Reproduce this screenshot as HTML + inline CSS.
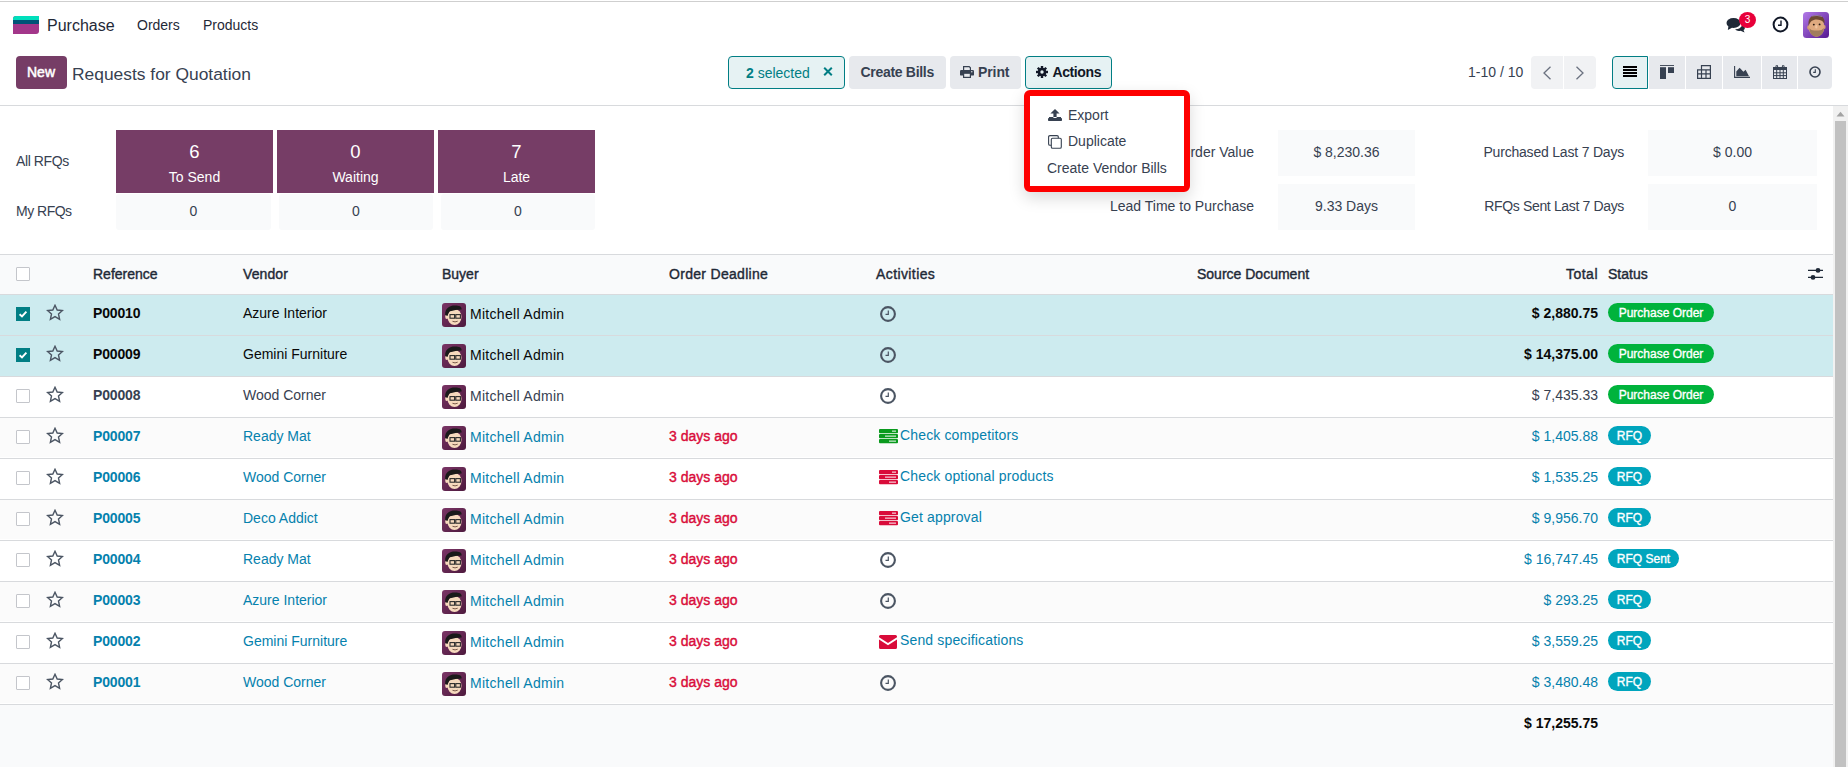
<!DOCTYPE html>
<html><head><meta charset="utf-8"><style>
*{box-sizing:border-box;margin:0;padding:0}
html,body{width:1848px;height:767px;overflow:hidden;background:#fff;font-family:"Liberation Sans",sans-serif;font-size:14px;color:#374151}
.a{position:absolute}
.t{position:absolute;white-space:nowrap;line-height:20px}
.b{font-weight:700}
.m{font-weight:400;-webkit-text-stroke:0.4px currentColor}
.topline{left:0;top:1px;width:1848px;height:1px;background:#cfcfcf}
.logo{left:13px;top:16px;width:26px;height:18px;border-radius:3px 0 3px 0;overflow:hidden;background:#a3368a}
.logo i{position:absolute;left:0;width:26px;display:block}
.cp{left:0;top:105px;width:1848px;height:1px;background:#d8dadd}
.btn{position:absolute;top:56px;height:33px;border-radius:4px}
.sec{background:#e7e9ed}
.act{background:#e6f2f3;border:1px solid #017e84}
.menu{left:1024px;top:90px;width:166px;height:102px;border:6px solid #fe0000;border-radius:6px;background:#fff;box-shadow:0 6px 16px rgba(0,0,0,0.15)}
.card{position:absolute;top:130px;width:157px;height:63px;background:#763d66}
.cell{position:absolute;background:#f9fafb;border-radius:3px}
.rowbg{position:absolute;left:0;width:1833px;height:41px}
.sel{background:#cdebef}
.str{background:#fbfbfb;height:39px}
.hline{position:absolute;left:0;width:1833px;height:1px;background:#d8dadd}
.cb{position:absolute;left:16px;width:14px;height:14px;border:1px solid #c4c6cb;background:#fff;border-radius:1px}
.cbon{background:#017e84;border-color:#017e84}
.badge{position:absolute;height:19px;border-radius:10px;color:#fff;font-weight:400;-webkit-text-stroke:0.35px #fff;font-size:12px;line-height:20px;text-align:center;white-space:nowrap}
.po{background:#00b33c}
.rfq{background:#00a5bd}
.info{color:#0581ad}
.dng{color:#d90c3a}
.dk{color:#080808}
.g7{color:#374151}
</style></head><body>
<div class="a topline"></div>
<div class="a logo"><i style="top:0;height:4px;background:#00dfbc"></i><i style="top:4px;height:4px;background:#005377"></i></div>
<div class="t " style="left:47px;top:16px;font-size:16px;color:#1f2937">Purchase</div>
<div class="t " style="left:137px;top:15px;color:#1f2937">Orders</div>
<div class="t " style="left:203px;top:15px;color:#1f2937">Products</div>
<svg class="a" style="left:1726px;top:17px" width="20" height="16" viewBox="0 0 20 16"><ellipse cx="7.5" cy="6" rx="7" ry="5" fill="#1f2937"/><path d="M2.5 9 L1.8 13 L6.5 10.5 Z" fill="#1f2937"/><path d="M9 12.2 Q14 12.5 16.5 8 L18.5 9.5 Q19.5 12 17.5 13 L18.6 15.6 L14.5 13.8 Q11 14.6 9 12.2 Z" fill="#1f2937"/></svg>
<div class="a" style="left:1739px;top:12px;width:17px;height:16px;border-radius:50%;background:#e8003a;color:#fff;font-size:10px;line-height:16px;text-align:center">3</div>
<svg class="a" style="left:1772px;top:16px" width="17" height="17" viewBox="0 0 17 17"><circle cx="8.5" cy="8.5" r="6.9" fill="none" stroke="#111827" stroke-width="2"/><path d="M9 4.5 V9.2 H6" fill="none" stroke="#111827" stroke-width="1.4"/></svg>
<svg class="a" style="left:1803px;top:12px" width="26" height="26" viewBox="0 0 26 26"><defs><linearGradient id="nv" x1="0" y1="0" x2="1" y2="1"><stop offset="0" stop-color="#b27ae8"/><stop offset="1" stop-color="#551890"/></linearGradient></defs><rect width="26" height="26" rx="3.5" fill="url(#nv)"/><ellipse cx="5.6" cy="15.5" rx="1.4" ry="2.3" fill="#d39c72"/><ellipse cx="21.4" cy="15" rx="1.2" ry="2.1" fill="#d39c72"/><ellipse cx="13.5" cy="14.8" rx="7.8" ry="10" fill="#dfa97f"/><path d="M5.6 14 C4.8 6.5 8 3 13.6 3 C19 3 22.2 6 21.6 12.5 C20.8 9.5 18.5 7.6 13.6 7.4 C9.5 7.4 7 9.5 5.6 14 Z" fill="#6d4932"/><path d="M9 4 Q14 2.6 19 4.5" stroke="#9a86b8" stroke-width="0.8" fill="none"/><circle cx="10.8" cy="12.6" r="0.95" fill="#2a1a12"/><circle cx="16.6" cy="12.4" r="0.95" fill="#2a1a12"/><path d="M6.4 16.2 Q8.5 19.3 13.5 18.4 Q18.5 19.3 20.8 16 Q21 23.6 13.6 24.8 Q6.6 24 6.4 16.2 Z" fill="#a17d5d"/><rect x="12.2" y="13" width="2.2" height="3.4" rx="1" fill="#efc39e"/></svg>
<div class="a cp"></div>
<div class="btn" style="left:16px;width:51px;background:#763d66"></div>
<div class="t m" style="left:27px;top:62px;color:#fff;-webkit-text-stroke:0.5px #fff">New</div>
<div class="t " style="left:72px;top:64px;font-size:17.4px;color:#374151">Requests for Quotation</div>
<div class="btn act" style="left:728px;width:117px"></div>
<div class="t " style="left:746px;top:63px;color:#017e84"><span class="b">2</span> selected</div>
<svg class="a" style="left:823px;top:67px" width="10" height="9" viewBox="0 0 10 9"><path d="M1.2 0.8 L8.8 8.2 M8.8 0.8 L1.2 8.2" stroke="#017e84" stroke-width="2"/></svg>
<div class="btn sec" style="left:849px;width:97px"></div>
<div class="t b" style="left:860.5px;top:62px;color:#374151;letter-spacing:-0.3px">Create Bills</div>
<div class="btn sec" style="left:950px;width:71px"></div>
<svg class="a" style="left:960px;top:66px" width="14" height="12" viewBox="0 0 14 12"><path d="M3.6 4 V0.6 H9.2 L10.4 1.8 V4" fill="none" stroke="#374151" stroke-width="1.2"/><rect x="0" y="4" width="14" height="5.6" rx="1.2" fill="#374151"/><rect x="3.6" y="7.2" width="6.8" height="4.2" fill="#e7e9ed" stroke="#374151" stroke-width="1.2"/><circle cx="11.8" cy="5.8" r="0.7" fill="#e7e9ed"/></svg>
<div class="t b" style="left:978px;top:62px;color:#374151;letter-spacing:-0.1px">Print</div>
<div class="btn act" style="left:1025px;width:87px"></div>
<svg class="a" style="left:1036px;top:66px" width="12" height="12" viewBox="0 0 12 12"><g fill="#111827"><circle cx="6" cy="6" r="4.3"/><rect x="4.8" y="0" width="2.4" height="12"/><rect x="0" y="4.8" width="12" height="2.4"/><rect x="4.8" y="0" width="2.4" height="12" transform="rotate(45 6 6)"/><rect x="4.8" y="0" width="2.4" height="12" transform="rotate(-45 6 6)"/></g><circle cx="6" cy="6" r="1.7" fill="#e6f2f3"/></svg>
<div class="t b" style="left:1052.5px;top:62px;color:#111827;letter-spacing:-0.4px">Actions</div>
<div class="t " style="left:1468px;top:62px;color:#374151">1-10 / 10</div>
<div class="btn" style="left:1531px;width:32px;background:#f1f2f4;border-radius:4px 0 0 4px"></div>
<div class="btn" style="left:1564px;width:32px;background:#f1f2f4;border-radius:0 4px 4px 0"></div>
<svg class="a" style="left:1542px;top:66px" width="10" height="14" viewBox="0 0 10 14"><path d="M8.5 0.8 L2 7 L8.5 13.2" fill="none" stroke="#6b7280" stroke-width="1.3"/></svg>
<svg class="a" style="left:1575px;top:66px" width="10" height="14" viewBox="0 0 10 14"><path d="M1.5 0.8 L8 7 L1.5 13.2" fill="none" stroke="#6b7280" stroke-width="1.3"/></svg>
<div class="btn act" style="left:1612px;width:36px;border-radius:4px 0 0 4px"></div>
<div class="btn sec" style="left:1649px;width:36px;border-radius:0"></div>
<div class="btn sec" style="left:1686px;width:36px;border-radius:0"></div>
<div class="btn sec" style="left:1723px;width:38px;border-radius:0"></div>
<div class="btn sec" style="left:1762px;width:35px;border-radius:0"></div>
<div class="btn sec" style="left:1798px;width:34px;border-radius:0 4px 4px 0"></div>
<svg class="a" style="left:1623px;top:66px" width="14" height="11" viewBox="0 0 14 11"><g fill="#000"><rect y="0" width="14" height="2"/><rect y="3" width="14" height="2"/><rect y="6" width="14" height="2"/><rect y="9" width="14" height="2"/></g></svg>
<svg class="a" style="left:1660px;top:65px" width="14" height="14" viewBox="0 0 14 14"><g fill="#374151"><rect y="0" width="14" height="0.9"/><rect x="0" y="2.2" width="6" height="11.8"/><rect x="8" y="2.2" width="6" height="5.8"/></g></svg>
<svg class="a" style="left:1697px;top:65px" width="14" height="14" viewBox="0 0 14 14"><path d="M4.5 0.6 H13.4 V13.4 H0.6 V4.8 H4.5 Z M4.5 4.8 H13.4 M0.6 8.9 H13.4 M4.5 4.8 V13.4 M9 4.8 V13.4" fill="none" stroke="#374151" stroke-width="1.2"/></svg>
<svg class="a" style="left:1734px;top:66px" width="16" height="12" viewBox="0 0 16 12"><path d="M0.6 0 V11.4 H16" fill="none" stroke="#374151" stroke-width="1.1"/><path d="M2.3 10.2 V5.5 L5.6 1.8 L9.4 5.8 L11.6 3.8 L15 10.2 Z" fill="#374151"/></svg>
<svg class="a" style="left:1773px;top:65px" width="14" height="14" viewBox="0 0 14 14"><rect x="0.5" y="2.5" width="13" height="11" fill="none" stroke="#374151" stroke-width="1"/><rect x="0.5" y="2.5" width="13" height="2.5" fill="#374151"/><path d="M0.5 7.8 H13.5 M0.5 10.6 H13.5 M3.7 5 V13.5 M7 5 V13.5 M10.3 5 V13.5" stroke="#374151" stroke-width="1"/><path d="M3 3.5 V1 Q3 0.2 3.8 0.2 Q4.6 0.2 4.6 1 V3.5 M9.4 3.5 V1 Q9.4 0.2 10.2 0.2 Q11 0.2 11 1 V3.5" fill="none" stroke="#374151" stroke-width="1"/></svg>
<svg class="a" style="left:1809px;top:66px" width="12" height="12" viewBox="0 0 12 12"><circle cx="6" cy="6" r="5" fill="none" stroke="#374151" stroke-width="1.6"/><path d="M6.3 3.2 V6.4 H4.2" fill="none" stroke="#374151" stroke-width="1.1"/></svg>
<div class="t " style="left:16px;top:151px;letter-spacing:-0.4px">All RFQs</div>
<div class="t " style="left:16px;top:201px;letter-spacing:-0.5px">My RFQs</div>
<div class="card" style="left:116px"></div>
<div class="t " style="left:94.5px;width:200px;text-align:center;top:141.5px;color:#fff;font-size:18.5px">6</div>
<div class="t " style="left:94.5px;width:200px;text-align:center;top:167px;color:#fff">To Send</div>
<div class="card" style="left:277px"></div>
<div class="t " style="left:255.5px;width:200px;text-align:center;top:141.5px;color:#fff;font-size:18.5px">0</div>
<div class="t " style="left:255.5px;width:200px;text-align:center;top:167px;color:#fff">Waiting</div>
<div class="card" style="left:438px"></div>
<div class="t " style="left:416.5px;width:200px;text-align:center;top:141.5px;color:#fff;font-size:18.5px">7</div>
<div class="t " style="left:416.5px;width:200px;text-align:center;top:167px;color:#fff">Late</div>
<div class="cell" style="left:116px;top:194px;width:155px;height:36px"></div>
<div class="t " style="left:93.5px;width:200px;text-align:center;top:201px;color:#374151">0</div>
<div class="cell" style="left:279px;top:194px;width:154px;height:36px"></div>
<div class="t " style="left:256.0px;width:200px;text-align:center;top:201px;color:#374151">0</div>
<div class="cell" style="left:441px;top:194px;width:154px;height:36px"></div>
<div class="t " style="left:418.0px;width:200px;text-align:center;top:201px;color:#374151">0</div>
<div class="t " style="right:594px;top:142px;">Average Order Value</div>
<div class="t " style="right:594px;top:196px;">Lead Time to Purchase</div>
<div class="t " style="right:224px;top:142px;letter-spacing:-0.2px">Purchased Last 7 Days</div>
<div class="t " style="right:224px;top:196px;letter-spacing:-0.35px">RFQs Sent Last 7 Days</div>
<div class="cell" style="left:1278px;top:130px;width:137px;height:46px;border-radius:0"></div>
<div class="cell" style="left:1278px;top:184px;width:137px;height:46px;border-radius:0"></div>
<div class="t " style="left:1246.5px;width:200px;text-align:center;top:142px;">$ 8,230.36</div>
<div class="t " style="left:1246.5px;width:200px;text-align:center;top:196px;">9.33 Days</div>
<div class="cell" style="left:1648px;top:130px;width:169px;height:46px;border-radius:0"></div>
<div class="cell" style="left:1648px;top:184px;width:169px;height:46px;border-radius:0"></div>
<div class="t " style="left:1632.5px;width:200px;text-align:center;top:142px;">$ 0.00</div>
<div class="t " style="left:1632.5px;width:200px;text-align:center;top:196px;">0</div>
<div class="hline" style="top:254px"></div>
<div class="a" style="left:0;top:255px;width:1833px;height:39px;background:#f9fafb"></div>
<div class="hline" style="top:294px"></div>
<div class="cb" style="top:267px"></div>
<div class="t m" style="left:93px;top:264px;color:#1f2937;letter-spacing:0px">Reference</div>
<div class="t m" style="left:243px;top:264px;color:#1f2937;letter-spacing:0.1px">Vendor</div>
<div class="t m" style="left:442px;top:264px;color:#1f2937;letter-spacing:0px">Buyer</div>
<div class="t m" style="left:669px;top:264px;color:#1f2937;letter-spacing:0.3px">Order Deadline</div>
<div class="t m" style="left:876px;top:264px;color:#1f2937;letter-spacing:0.4px">Activities</div>
<div class="t m" style="left:1197px;top:264px;color:#1f2937;letter-spacing:0px">Source Document</div>
<div class="t m" style="left:1608px;top:264px;color:#1f2937;letter-spacing:0px">Status</div>
<div class="t m" style="right:250px;top:264px;color:#1f2937;letter-spacing:0.5px">Total</div>
<svg class="a" style="left:1807px;top:267px" width="17" height="13" viewBox="0 0 17 13"><path d="M1 3.4 H16 M1 10.4 H16" stroke="#1f2937" stroke-width="1.3"/><circle cx="11" cy="3.4" r="2.4" fill="#1f2937"/><circle cx="6" cy="10.4" r="2.4" fill="#1f2937"/></svg>
<div class="rowbg sel" style="top:295px"></div>
<div class="hline" style="top:335px"></div>
<svg class="a" style="left:16px;top:307px" width="14" height="14" viewBox="0 0 14 14"><rect width="14" height="14" fill="#017e84"/><path d="M3.6 7.2 L6 9.4 L10.4 4.6" fill="none" stroke="#fff" stroke-width="1.9"/></svg>
<svg class="a" style="left:46px;top:304px" width="18" height="17" viewBox="0 0 18 17"><path d="M9 1.3 L11.2 6 L16.4 6.5 L12.5 10 L13.6 15.3 L9 12.6 L4.4 15.3 L5.5 10 L1.6 6.5 L6.8 6 Z" fill="none" stroke="#4b5563" stroke-width="1.4" stroke-linejoin="miter"/></svg>
<div class="t b dk" style="left:93px;top:303px;letter-spacing:-0.15px">P00010</div>
<div class="t dk" style="left:243px;top:303px;">Azure Interior</div>
<svg class="a" style="left:442px;top:303px" width="24" height="24" viewBox="0 0 24 24"><defs><linearGradient id="ag0" x1="0" y1="0" x2="1" y2="1"><stop offset="0" stop-color="#7a3566"/><stop offset="1" stop-color="#4e1a3e"/></linearGradient></defs><rect width="24" height="24" rx="3" fill="url(#ag0)"/><ellipse cx="12.5" cy="14" rx="7" ry="8" fill="#f6d9bd"/><ellipse cx="4.8" cy="13.8" rx="1.6" ry="2.3" fill="#f6d9bd"/><path d="M3.2 12 C2.8 5 8 2.5 13 2.6 C17 2.6 20 3.5 19.6 6.5 C16 6.6 11 7.5 8 8.2 C6.5 9.5 6 11 5.5 13 Z" fill="#1a1a1a"/><rect x="8" y="11.6" width="4.6" height="3.6" fill="none" stroke="#2a2a2a" stroke-width="1.1"/><rect x="13.8" y="11.6" width="4.6" height="3.6" fill="none" stroke="#2a2a2a" stroke-width="1.1"/><path d="M10.5 18.3 Q13 19.5 15.7 18.2" stroke="#7a5a4a" stroke-width="1" fill="none"/></svg>
<div class="t dk" style="left:470px;top:304px;letter-spacing:0.3px">Mitchell Admin</div>
<svg class="a" style="left:879px;top:304.5px" width="18" height="18" viewBox="0 0 18 18"><circle cx="9" cy="9" r="6.9" fill="none" stroke="#4b5563" stroke-width="2.1"/><path d="M9.3 5.4 V9.4 H6.5" fill="none" stroke="#4b5563" stroke-width="1.2"/></svg>
<div class="t b dk" style="right:250px;top:303px;">$ 2,880.75</div>
<div class="badge po" style="left:1608px;top:303px;width:106px">Purchase Order</div>
<div class="rowbg sel" style="top:336px"></div>
<div class="hline" style="top:376px"></div>
<svg class="a" style="left:16px;top:348px" width="14" height="14" viewBox="0 0 14 14"><rect width="14" height="14" fill="#017e84"/><path d="M3.6 7.2 L6 9.4 L10.4 4.6" fill="none" stroke="#fff" stroke-width="1.9"/></svg>
<svg class="a" style="left:46px;top:345px" width="18" height="17" viewBox="0 0 18 17"><path d="M9 1.3 L11.2 6 L16.4 6.5 L12.5 10 L13.6 15.3 L9 12.6 L4.4 15.3 L5.5 10 L1.6 6.5 L6.8 6 Z" fill="none" stroke="#4b5563" stroke-width="1.4" stroke-linejoin="miter"/></svg>
<div class="t b dk" style="left:93px;top:344px;letter-spacing:-0.15px">P00009</div>
<div class="t dk" style="left:243px;top:344px;">Gemini Furniture</div>
<svg class="a" style="left:442px;top:344px" width="24" height="24" viewBox="0 0 24 24"><defs><linearGradient id="ag1" x1="0" y1="0" x2="1" y2="1"><stop offset="0" stop-color="#7a3566"/><stop offset="1" stop-color="#4e1a3e"/></linearGradient></defs><rect width="24" height="24" rx="3" fill="url(#ag1)"/><ellipse cx="12.5" cy="14" rx="7" ry="8" fill="#f6d9bd"/><ellipse cx="4.8" cy="13.8" rx="1.6" ry="2.3" fill="#f6d9bd"/><path d="M3.2 12 C2.8 5 8 2.5 13 2.6 C17 2.6 20 3.5 19.6 6.5 C16 6.6 11 7.5 8 8.2 C6.5 9.5 6 11 5.5 13 Z" fill="#1a1a1a"/><rect x="8" y="11.6" width="4.6" height="3.6" fill="none" stroke="#2a2a2a" stroke-width="1.1"/><rect x="13.8" y="11.6" width="4.6" height="3.6" fill="none" stroke="#2a2a2a" stroke-width="1.1"/><path d="M10.5 18.3 Q13 19.5 15.7 18.2" stroke="#7a5a4a" stroke-width="1" fill="none"/></svg>
<div class="t dk" style="left:470px;top:345px;letter-spacing:0.3px">Mitchell Admin</div>
<svg class="a" style="left:879px;top:345.5px" width="18" height="18" viewBox="0 0 18 18"><circle cx="9" cy="9" r="6.9" fill="none" stroke="#4b5563" stroke-width="2.1"/><path d="M9.3 5.4 V9.4 H6.5" fill="none" stroke="#4b5563" stroke-width="1.2"/></svg>
<div class="t b dk" style="right:250px;top:344px;">$ 14,375.00</div>
<div class="badge po" style="left:1608px;top:344px;width:106px">Purchase Order</div>
<div class="hline" style="top:417px"></div>
<div class="cb" style="top:389px"></div>
<svg class="a" style="left:46px;top:386px" width="18" height="17" viewBox="0 0 18 17"><path d="M9 1.3 L11.2 6 L16.4 6.5 L12.5 10 L13.6 15.3 L9 12.6 L4.4 15.3 L5.5 10 L1.6 6.5 L6.8 6 Z" fill="none" stroke="#4b5563" stroke-width="1.4" stroke-linejoin="miter"/></svg>
<div class="t b g7" style="left:93px;top:385px;letter-spacing:-0.15px">P00008</div>
<div class="t g7" style="left:243px;top:385px;">Wood Corner</div>
<svg class="a" style="left:442px;top:385px" width="24" height="24" viewBox="0 0 24 24"><defs><linearGradient id="ag2" x1="0" y1="0" x2="1" y2="1"><stop offset="0" stop-color="#7a3566"/><stop offset="1" stop-color="#4e1a3e"/></linearGradient></defs><rect width="24" height="24" rx="3" fill="url(#ag2)"/><ellipse cx="12.5" cy="14" rx="7" ry="8" fill="#f6d9bd"/><ellipse cx="4.8" cy="13.8" rx="1.6" ry="2.3" fill="#f6d9bd"/><path d="M3.2 12 C2.8 5 8 2.5 13 2.6 C17 2.6 20 3.5 19.6 6.5 C16 6.6 11 7.5 8 8.2 C6.5 9.5 6 11 5.5 13 Z" fill="#1a1a1a"/><rect x="8" y="11.6" width="4.6" height="3.6" fill="none" stroke="#2a2a2a" stroke-width="1.1"/><rect x="13.8" y="11.6" width="4.6" height="3.6" fill="none" stroke="#2a2a2a" stroke-width="1.1"/><path d="M10.5 18.3 Q13 19.5 15.7 18.2" stroke="#7a5a4a" stroke-width="1" fill="none"/></svg>
<div class="t g7" style="left:470px;top:386px;letter-spacing:0.3px">Mitchell Admin</div>
<svg class="a" style="left:879px;top:386.5px" width="18" height="18" viewBox="0 0 18 18"><circle cx="9" cy="9" r="6.9" fill="none" stroke="#4b5563" stroke-width="2.1"/><path d="M9.3 5.4 V9.4 H6.5" fill="none" stroke="#4b5563" stroke-width="1.2"/></svg>
<div class="t g7" style="right:250px;top:385px;">$ 7,435.33</div>
<div class="badge po" style="left:1608px;top:385px;width:106px">Purchase Order</div>
<div class="rowbg str" style="top:418px"></div>
<div class="hline" style="top:458px"></div>
<div class="cb" style="top:430px"></div>
<svg class="a" style="left:46px;top:427px" width="18" height="17" viewBox="0 0 18 17"><path d="M9 1.3 L11.2 6 L16.4 6.5 L12.5 10 L13.6 15.3 L9 12.6 L4.4 15.3 L5.5 10 L1.6 6.5 L6.8 6 Z" fill="none" stroke="#4b5563" stroke-width="1.4" stroke-linejoin="miter"/></svg>
<div class="t b info" style="left:93px;top:426px;letter-spacing:-0.15px">P00007</div>
<div class="t info" style="left:243px;top:426px;">Ready Mat</div>
<svg class="a" style="left:442px;top:426px" width="24" height="24" viewBox="0 0 24 24"><defs><linearGradient id="ag3" x1="0" y1="0" x2="1" y2="1"><stop offset="0" stop-color="#7a3566"/><stop offset="1" stop-color="#4e1a3e"/></linearGradient></defs><rect width="24" height="24" rx="3" fill="url(#ag3)"/><ellipse cx="12.5" cy="14" rx="7" ry="8" fill="#f6d9bd"/><ellipse cx="4.8" cy="13.8" rx="1.6" ry="2.3" fill="#f6d9bd"/><path d="M3.2 12 C2.8 5 8 2.5 13 2.6 C17 2.6 20 3.5 19.6 6.5 C16 6.6 11 7.5 8 8.2 C6.5 9.5 6 11 5.5 13 Z" fill="#1a1a1a"/><rect x="8" y="11.6" width="4.6" height="3.6" fill="none" stroke="#2a2a2a" stroke-width="1.1"/><rect x="13.8" y="11.6" width="4.6" height="3.6" fill="none" stroke="#2a2a2a" stroke-width="1.1"/><path d="M10.5 18.3 Q13 19.5 15.7 18.2" stroke="#7a5a4a" stroke-width="1" fill="none"/></svg>
<div class="t info" style="left:470px;top:427px;letter-spacing:0.3px">Mitchell Admin</div>
<div class="t m dng" style="left:669px;top:426px;">3 days ago</div>
<svg class="a" style="left:879px;top:429px" width="19" height="15" viewBox="0 0 19 15"><rect x="0" y="0" width="19" height="4.3" rx="1" fill="#0a9a1e"/><rect x="13" y="1.5" width="4" height="1.3" fill="#fff" opacity="0.75"/><rect x="0" y="5" width="19" height="4.3" rx="1" fill="#0a9a1e"/><rect x="6" y="6.5" width="11" height="1.3" fill="#fff" opacity="0.75"/><rect x="0" y="10" width="19" height="4.3" rx="1" fill="#0a9a1e"/><rect x="10" y="11.5" width="7" height="1.3" fill="#fff" opacity="0.75"/></svg>
<div class="t info" style="left:900px;top:425px;letter-spacing:0.15px">Check competitors</div>
<div class="t info" style="right:250px;top:426px;">$ 1,405.88</div>
<div class="badge rfq" style="left:1608px;top:426px;width:43px">RFQ</div>
<div class="hline" style="top:499px"></div>
<div class="cb" style="top:471px"></div>
<svg class="a" style="left:46px;top:468px" width="18" height="17" viewBox="0 0 18 17"><path d="M9 1.3 L11.2 6 L16.4 6.5 L12.5 10 L13.6 15.3 L9 12.6 L4.4 15.3 L5.5 10 L1.6 6.5 L6.8 6 Z" fill="none" stroke="#4b5563" stroke-width="1.4" stroke-linejoin="miter"/></svg>
<div class="t b info" style="left:93px;top:467px;letter-spacing:-0.15px">P00006</div>
<div class="t info" style="left:243px;top:467px;">Wood Corner</div>
<svg class="a" style="left:442px;top:467px" width="24" height="24" viewBox="0 0 24 24"><defs><linearGradient id="ag4" x1="0" y1="0" x2="1" y2="1"><stop offset="0" stop-color="#7a3566"/><stop offset="1" stop-color="#4e1a3e"/></linearGradient></defs><rect width="24" height="24" rx="3" fill="url(#ag4)"/><ellipse cx="12.5" cy="14" rx="7" ry="8" fill="#f6d9bd"/><ellipse cx="4.8" cy="13.8" rx="1.6" ry="2.3" fill="#f6d9bd"/><path d="M3.2 12 C2.8 5 8 2.5 13 2.6 C17 2.6 20 3.5 19.6 6.5 C16 6.6 11 7.5 8 8.2 C6.5 9.5 6 11 5.5 13 Z" fill="#1a1a1a"/><rect x="8" y="11.6" width="4.6" height="3.6" fill="none" stroke="#2a2a2a" stroke-width="1.1"/><rect x="13.8" y="11.6" width="4.6" height="3.6" fill="none" stroke="#2a2a2a" stroke-width="1.1"/><path d="M10.5 18.3 Q13 19.5 15.7 18.2" stroke="#7a5a4a" stroke-width="1" fill="none"/></svg>
<div class="t info" style="left:470px;top:468px;letter-spacing:0.3px">Mitchell Admin</div>
<div class="t m dng" style="left:669px;top:467px;">3 days ago</div>
<svg class="a" style="left:879px;top:470px" width="19" height="15" viewBox="0 0 19 15"><rect x="0" y="0" width="19" height="4.3" rx="1" fill="#d90c3a"/><rect x="13" y="1.5" width="4" height="1.3" fill="#fff" opacity="0.75"/><rect x="0" y="5" width="19" height="4.3" rx="1" fill="#d90c3a"/><rect x="6" y="6.5" width="11" height="1.3" fill="#fff" opacity="0.75"/><rect x="0" y="10" width="19" height="4.3" rx="1" fill="#d90c3a"/><rect x="10" y="11.5" width="7" height="1.3" fill="#fff" opacity="0.75"/></svg>
<div class="t info" style="left:900px;top:466px;letter-spacing:0.15px">Check optional products</div>
<div class="t info" style="right:250px;top:467px;">$ 1,535.25</div>
<div class="badge rfq" style="left:1608px;top:467px;width:43px">RFQ</div>
<div class="rowbg str" style="top:500px"></div>
<div class="hline" style="top:540px"></div>
<div class="cb" style="top:512px"></div>
<svg class="a" style="left:46px;top:509px" width="18" height="17" viewBox="0 0 18 17"><path d="M9 1.3 L11.2 6 L16.4 6.5 L12.5 10 L13.6 15.3 L9 12.6 L4.4 15.3 L5.5 10 L1.6 6.5 L6.8 6 Z" fill="none" stroke="#4b5563" stroke-width="1.4" stroke-linejoin="miter"/></svg>
<div class="t b info" style="left:93px;top:508px;letter-spacing:-0.15px">P00005</div>
<div class="t info" style="left:243px;top:508px;">Deco Addict</div>
<svg class="a" style="left:442px;top:508px" width="24" height="24" viewBox="0 0 24 24"><defs><linearGradient id="ag5" x1="0" y1="0" x2="1" y2="1"><stop offset="0" stop-color="#7a3566"/><stop offset="1" stop-color="#4e1a3e"/></linearGradient></defs><rect width="24" height="24" rx="3" fill="url(#ag5)"/><ellipse cx="12.5" cy="14" rx="7" ry="8" fill="#f6d9bd"/><ellipse cx="4.8" cy="13.8" rx="1.6" ry="2.3" fill="#f6d9bd"/><path d="M3.2 12 C2.8 5 8 2.5 13 2.6 C17 2.6 20 3.5 19.6 6.5 C16 6.6 11 7.5 8 8.2 C6.5 9.5 6 11 5.5 13 Z" fill="#1a1a1a"/><rect x="8" y="11.6" width="4.6" height="3.6" fill="none" stroke="#2a2a2a" stroke-width="1.1"/><rect x="13.8" y="11.6" width="4.6" height="3.6" fill="none" stroke="#2a2a2a" stroke-width="1.1"/><path d="M10.5 18.3 Q13 19.5 15.7 18.2" stroke="#7a5a4a" stroke-width="1" fill="none"/></svg>
<div class="t info" style="left:470px;top:509px;letter-spacing:0.3px">Mitchell Admin</div>
<div class="t m dng" style="left:669px;top:508px;">3 days ago</div>
<svg class="a" style="left:879px;top:511px" width="19" height="15" viewBox="0 0 19 15"><rect x="0" y="0" width="19" height="4.3" rx="1" fill="#d90c3a"/><rect x="13" y="1.5" width="4" height="1.3" fill="#fff" opacity="0.75"/><rect x="0" y="5" width="19" height="4.3" rx="1" fill="#d90c3a"/><rect x="6" y="6.5" width="11" height="1.3" fill="#fff" opacity="0.75"/><rect x="0" y="10" width="19" height="4.3" rx="1" fill="#d90c3a"/><rect x="10" y="11.5" width="7" height="1.3" fill="#fff" opacity="0.75"/></svg>
<div class="t info" style="left:900px;top:507px;letter-spacing:0.15px">Get approval</div>
<div class="t info" style="right:250px;top:508px;">$ 9,956.70</div>
<div class="badge rfq" style="left:1608px;top:508px;width:43px">RFQ</div>
<div class="hline" style="top:581px"></div>
<div class="cb" style="top:553px"></div>
<svg class="a" style="left:46px;top:550px" width="18" height="17" viewBox="0 0 18 17"><path d="M9 1.3 L11.2 6 L16.4 6.5 L12.5 10 L13.6 15.3 L9 12.6 L4.4 15.3 L5.5 10 L1.6 6.5 L6.8 6 Z" fill="none" stroke="#4b5563" stroke-width="1.4" stroke-linejoin="miter"/></svg>
<div class="t b info" style="left:93px;top:549px;letter-spacing:-0.15px">P00004</div>
<div class="t info" style="left:243px;top:549px;">Ready Mat</div>
<svg class="a" style="left:442px;top:549px" width="24" height="24" viewBox="0 0 24 24"><defs><linearGradient id="ag6" x1="0" y1="0" x2="1" y2="1"><stop offset="0" stop-color="#7a3566"/><stop offset="1" stop-color="#4e1a3e"/></linearGradient></defs><rect width="24" height="24" rx="3" fill="url(#ag6)"/><ellipse cx="12.5" cy="14" rx="7" ry="8" fill="#f6d9bd"/><ellipse cx="4.8" cy="13.8" rx="1.6" ry="2.3" fill="#f6d9bd"/><path d="M3.2 12 C2.8 5 8 2.5 13 2.6 C17 2.6 20 3.5 19.6 6.5 C16 6.6 11 7.5 8 8.2 C6.5 9.5 6 11 5.5 13 Z" fill="#1a1a1a"/><rect x="8" y="11.6" width="4.6" height="3.6" fill="none" stroke="#2a2a2a" stroke-width="1.1"/><rect x="13.8" y="11.6" width="4.6" height="3.6" fill="none" stroke="#2a2a2a" stroke-width="1.1"/><path d="M10.5 18.3 Q13 19.5 15.7 18.2" stroke="#7a5a4a" stroke-width="1" fill="none"/></svg>
<div class="t info" style="left:470px;top:550px;letter-spacing:0.3px">Mitchell Admin</div>
<div class="t m dng" style="left:669px;top:549px;">3 days ago</div>
<svg class="a" style="left:879px;top:550.5px" width="18" height="18" viewBox="0 0 18 18"><circle cx="9" cy="9" r="6.9" fill="none" stroke="#4b5563" stroke-width="2.1"/><path d="M9.3 5.4 V9.4 H6.5" fill="none" stroke="#4b5563" stroke-width="1.2"/></svg>
<div class="t info" style="right:250px;top:549px;">$ 16,747.45</div>
<div class="badge rfq" style="left:1608px;top:549px;width:71px">RFQ Sent</div>
<div class="rowbg str" style="top:582px"></div>
<div class="hline" style="top:622px"></div>
<div class="cb" style="top:594px"></div>
<svg class="a" style="left:46px;top:591px" width="18" height="17" viewBox="0 0 18 17"><path d="M9 1.3 L11.2 6 L16.4 6.5 L12.5 10 L13.6 15.3 L9 12.6 L4.4 15.3 L5.5 10 L1.6 6.5 L6.8 6 Z" fill="none" stroke="#4b5563" stroke-width="1.4" stroke-linejoin="miter"/></svg>
<div class="t b info" style="left:93px;top:590px;letter-spacing:-0.15px">P00003</div>
<div class="t info" style="left:243px;top:590px;">Azure Interior</div>
<svg class="a" style="left:442px;top:590px" width="24" height="24" viewBox="0 0 24 24"><defs><linearGradient id="ag7" x1="0" y1="0" x2="1" y2="1"><stop offset="0" stop-color="#7a3566"/><stop offset="1" stop-color="#4e1a3e"/></linearGradient></defs><rect width="24" height="24" rx="3" fill="url(#ag7)"/><ellipse cx="12.5" cy="14" rx="7" ry="8" fill="#f6d9bd"/><ellipse cx="4.8" cy="13.8" rx="1.6" ry="2.3" fill="#f6d9bd"/><path d="M3.2 12 C2.8 5 8 2.5 13 2.6 C17 2.6 20 3.5 19.6 6.5 C16 6.6 11 7.5 8 8.2 C6.5 9.5 6 11 5.5 13 Z" fill="#1a1a1a"/><rect x="8" y="11.6" width="4.6" height="3.6" fill="none" stroke="#2a2a2a" stroke-width="1.1"/><rect x="13.8" y="11.6" width="4.6" height="3.6" fill="none" stroke="#2a2a2a" stroke-width="1.1"/><path d="M10.5 18.3 Q13 19.5 15.7 18.2" stroke="#7a5a4a" stroke-width="1" fill="none"/></svg>
<div class="t info" style="left:470px;top:591px;letter-spacing:0.3px">Mitchell Admin</div>
<div class="t m dng" style="left:669px;top:590px;">3 days ago</div>
<svg class="a" style="left:879px;top:591.5px" width="18" height="18" viewBox="0 0 18 18"><circle cx="9" cy="9" r="6.9" fill="none" stroke="#4b5563" stroke-width="2.1"/><path d="M9.3 5.4 V9.4 H6.5" fill="none" stroke="#4b5563" stroke-width="1.2"/></svg>
<div class="t info" style="right:250px;top:590px;">$ 293.25</div>
<div class="badge rfq" style="left:1608px;top:590px;width:43px">RFQ</div>
<div class="hline" style="top:663px"></div>
<div class="cb" style="top:635px"></div>
<svg class="a" style="left:46px;top:632px" width="18" height="17" viewBox="0 0 18 17"><path d="M9 1.3 L11.2 6 L16.4 6.5 L12.5 10 L13.6 15.3 L9 12.6 L4.4 15.3 L5.5 10 L1.6 6.5 L6.8 6 Z" fill="none" stroke="#4b5563" stroke-width="1.4" stroke-linejoin="miter"/></svg>
<div class="t b info" style="left:93px;top:631px;letter-spacing:-0.15px">P00002</div>
<div class="t info" style="left:243px;top:631px;">Gemini Furniture</div>
<svg class="a" style="left:442px;top:631px" width="24" height="24" viewBox="0 0 24 24"><defs><linearGradient id="ag8" x1="0" y1="0" x2="1" y2="1"><stop offset="0" stop-color="#7a3566"/><stop offset="1" stop-color="#4e1a3e"/></linearGradient></defs><rect width="24" height="24" rx="3" fill="url(#ag8)"/><ellipse cx="12.5" cy="14" rx="7" ry="8" fill="#f6d9bd"/><ellipse cx="4.8" cy="13.8" rx="1.6" ry="2.3" fill="#f6d9bd"/><path d="M3.2 12 C2.8 5 8 2.5 13 2.6 C17 2.6 20 3.5 19.6 6.5 C16 6.6 11 7.5 8 8.2 C6.5 9.5 6 11 5.5 13 Z" fill="#1a1a1a"/><rect x="8" y="11.6" width="4.6" height="3.6" fill="none" stroke="#2a2a2a" stroke-width="1.1"/><rect x="13.8" y="11.6" width="4.6" height="3.6" fill="none" stroke="#2a2a2a" stroke-width="1.1"/><path d="M10.5 18.3 Q13 19.5 15.7 18.2" stroke="#7a5a4a" stroke-width="1" fill="none"/></svg>
<div class="t info" style="left:470px;top:632px;letter-spacing:0.3px">Mitchell Admin</div>
<div class="t m dng" style="left:669px;top:631px;">3 days ago</div>
<svg class="a" style="left:879px;top:635px" width="18" height="14" viewBox="0 0 18 14"><path d="M1.5 0 H16.5 Q18 0 18 1.5 V2.2 L9 8 L0 2.2 V1.5 Q0 0 1.5 0 Z" fill="#d90c3a"/><path d="M0 4.6 L9 10.3 L18 4.6 V12.5 Q18 14 16.5 14 H1.5 Q0 14 0 12.5 Z" fill="#d90c3a"/></svg>
<div class="t info" style="left:900px;top:630px;letter-spacing:0.15px">Send specifications</div>
<div class="t info" style="right:250px;top:631px;">$ 3,559.25</div>
<div class="badge rfq" style="left:1608px;top:631px;width:43px">RFQ</div>
<div class="rowbg str" style="top:664px"></div>
<div class="hline" style="top:704px"></div>
<div class="cb" style="top:676px"></div>
<svg class="a" style="left:46px;top:673px" width="18" height="17" viewBox="0 0 18 17"><path d="M9 1.3 L11.2 6 L16.4 6.5 L12.5 10 L13.6 15.3 L9 12.6 L4.4 15.3 L5.5 10 L1.6 6.5 L6.8 6 Z" fill="none" stroke="#4b5563" stroke-width="1.4" stroke-linejoin="miter"/></svg>
<div class="t b info" style="left:93px;top:672px;letter-spacing:-0.15px">P00001</div>
<div class="t info" style="left:243px;top:672px;">Wood Corner</div>
<svg class="a" style="left:442px;top:672px" width="24" height="24" viewBox="0 0 24 24"><defs><linearGradient id="ag9" x1="0" y1="0" x2="1" y2="1"><stop offset="0" stop-color="#7a3566"/><stop offset="1" stop-color="#4e1a3e"/></linearGradient></defs><rect width="24" height="24" rx="3" fill="url(#ag9)"/><ellipse cx="12.5" cy="14" rx="7" ry="8" fill="#f6d9bd"/><ellipse cx="4.8" cy="13.8" rx="1.6" ry="2.3" fill="#f6d9bd"/><path d="M3.2 12 C2.8 5 8 2.5 13 2.6 C17 2.6 20 3.5 19.6 6.5 C16 6.6 11 7.5 8 8.2 C6.5 9.5 6 11 5.5 13 Z" fill="#1a1a1a"/><rect x="8" y="11.6" width="4.6" height="3.6" fill="none" stroke="#2a2a2a" stroke-width="1.1"/><rect x="13.8" y="11.6" width="4.6" height="3.6" fill="none" stroke="#2a2a2a" stroke-width="1.1"/><path d="M10.5 18.3 Q13 19.5 15.7 18.2" stroke="#7a5a4a" stroke-width="1" fill="none"/></svg>
<div class="t info" style="left:470px;top:673px;letter-spacing:0.3px">Mitchell Admin</div>
<div class="t m dng" style="left:669px;top:672px;">3 days ago</div>
<svg class="a" style="left:879px;top:673.5px" width="18" height="18" viewBox="0 0 18 18"><circle cx="9" cy="9" r="6.9" fill="none" stroke="#4b5563" stroke-width="2.1"/><path d="M9.3 5.4 V9.4 H6.5" fill="none" stroke="#4b5563" stroke-width="1.2"/></svg>
<div class="t info" style="right:250px;top:672px;">$ 3,480.48</div>
<div class="badge rfq" style="left:1608px;top:672px;width:43px">RFQ</div>
<div class="a" style="left:0;top:705px;width:1833px;height:62px;background:#f9fafb"></div>
<div class="t b dk" style="right:250px;top:713px;">$ 17,255.75</div>
<div class="a" style="left:1833px;top:106px;width:15px;height:661px;background:#f1f1f1"></div>
<svg class="a" style="left:1836px;top:111px" width="9" height="6" viewBox="0 0 9 6"><path d="M0.5 5.5 L4.5 0.8 L8.5 5.5 Z" fill="#a3a3a3"/></svg>
<div class="a" style="left:1835px;top:121px;width:11px;height:646px;background:#c1c1c1"></div>
<div class="a menu"></div>
<svg class="a" style="left:1048px;top:109px" width="14" height="12" viewBox="0 0 14 12"><path d="M7 0 L11.6 4.6 H8.6 V8 H5.4 V4.6 H2.4 Z" fill="#374151"/><rect x="0" y="9" width="14" height="3" rx="0.8" fill="#374151"/><rect x="1" y="8" width="4.4" height="1.2" fill="#374151"/><rect x="8.6" y="8" width="4.4" height="1.2" fill="#374151"/></svg>
<div class="t " style="left:1068px;top:105px;">Export</div>
<svg class="a" style="left:1048px;top:135px" width="14" height="14" viewBox="0 0 14 14"><path d="M10.3 3.3 V2 Q10.3 0.6 9 0.6 H2 Q0.6 0.6 0.6 2 V9 Q0.6 10.3 2 10.3 H3.3" fill="none" stroke="#374151" stroke-width="1.1"/><rect x="3.3" y="3.3" width="10" height="10" rx="1.3" fill="none" stroke="#374151" stroke-width="1.1"/></svg>
<div class="t " style="left:1068px;top:131px;">Duplicate</div>
<div class="t " style="left:1047px;top:158px;">Create Vendor Bills</div>
</body></html>
